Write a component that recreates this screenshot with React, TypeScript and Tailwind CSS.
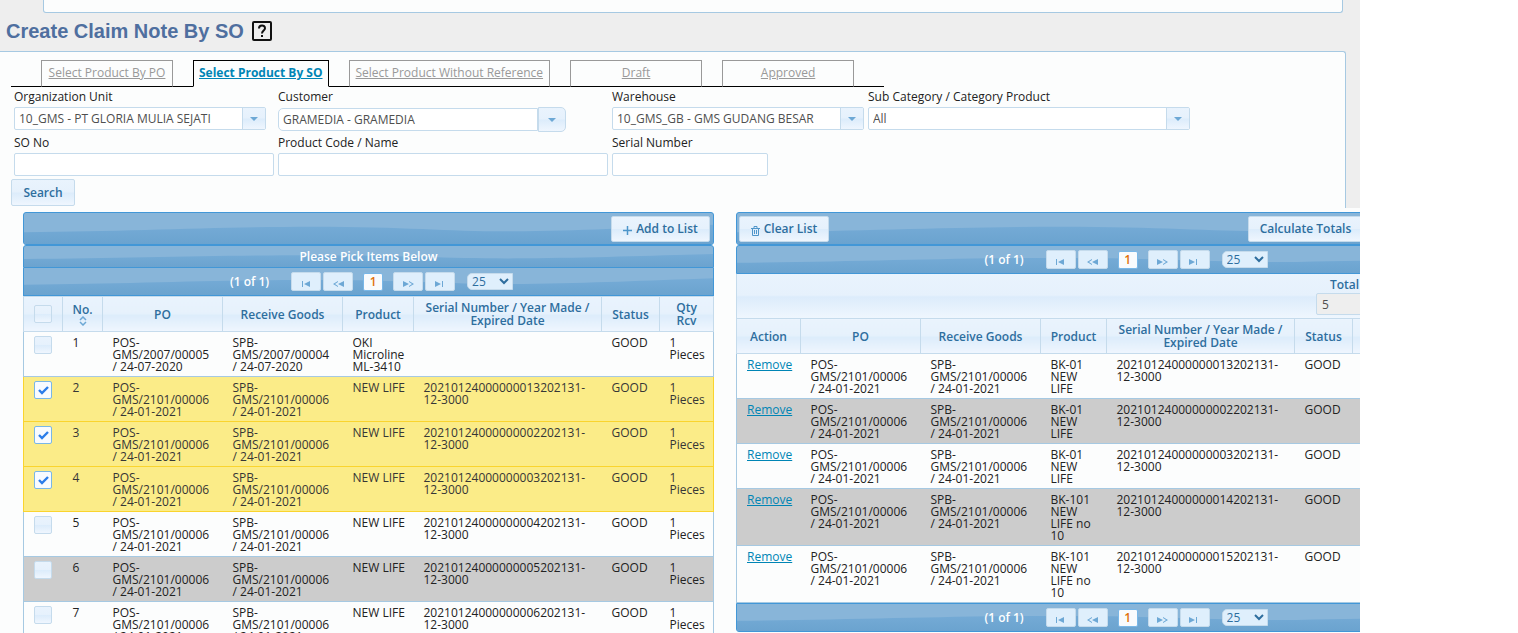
import React, { useState } from "react";

type Row = { id: number; po: string; receive: string; product: string; serial: string };

const TABS = ["Select Product By PO", "Select Product By SO", "Select Product Without Reference", "Draft", "Approved"];

const PO = "POS-\nGMS/2101/00006\n/ 24-01-2021";
const RECEIVE = "SPB-\nGMS/2101/00006\n/ 24-01-2021";

const PICK_ROWS: Row[] = [
  {
    id: 1,
    po: "POS-\nGMS/2007/00005\n/ 24-07-2020",
    receive: "SPB-\nGMS/2007/00004\n/ 24-07-2020",
    product: "OKI\nMicroline\nML-3410",
    serial: ""
  },
  { id: 2, po: PO, receive: RECEIVE, product: "NEW LIFE", serial: "20210124000000013202131-\n12-3000" },
  { id: 3, po: PO, receive: RECEIVE, product: "NEW LIFE", serial: "20210124000000002202131-\n12-3000" },
  { id: 4, po: PO, receive: RECEIVE, product: "NEW LIFE", serial: "20210124000000003202131-\n12-3000" },
  { id: 5, po: PO, receive: RECEIVE, product: "NEW LIFE", serial: "20210124000000004202131-\n12-3000" },
  { id: 6, po: PO, receive: RECEIVE, product: "NEW LIFE", serial: "20210124000000005202131-\n12-3000" },
  { id: 7, po: PO, receive: RECEIVE, product: "NEW LIFE", serial: "20210124000000006202131-\n12-3000" }
];

const LIST_ROWS: Row[] = [
  { id: 1, po: PO, receive: RECEIVE, product: "BK-01\nNEW\nLIFE", serial: "20210124000000013202131-\n12-3000" },
  { id: 2, po: PO, receive: RECEIVE, product: "BK-01\nNEW\nLIFE", serial: "20210124000000002202131-\n12-3000" },
  { id: 3, po: PO, receive: RECEIVE, product: "BK-01\nNEW\nLIFE", serial: "20210124000000003202131-\n12-3000" },
  { id: 4, po: PO, receive: RECEIVE, product: "BK-101\nNEW\nLIFE no\n10", serial: "20210124000000014202131-\n12-3000" },
  { id: 5, po: PO, receive: RECEIVE, product: "BK-101\nNEW\nLIFE no\n10", serial: "20210124000000015202131-\n12-3000" }
];

const GLASS = "bg-[linear-gradient(#e9f3fd_0%,#e6f1fc_48%,#dcecfb_52%,#eff6fe_100%)]";
const BTN = `${GLASS} border border-[#c5dbec] rounded-[2px] font-semibold text-[#2e6e9e] cursor-pointer`;
const FIELD = "h-[23px] border border-[#c5dbec] rounded-[2px] bg-white text-[12px] text-[#4f4f4f] px-1 focus:outline-none";
const HEAD = `${GLASS} border border-[#c5dbec] px-1 font-semibold text-[12px] leading-[13px] text-[#2e6e9e] text-center align-middle`;
const CELL = "pl-[10px] pr-2 pt-[5px] pb-[3px] align-top whitespace-pre-line";

/* Blue bar with the glossy wave behind its content */
const WaveBar = ({ className, children }: { className: string; children?: React.ReactNode }) => (
  <div className={`relative isolate overflow-hidden border border-[#4297d7] bg-[#88b5d9] ${className}`}>
    <svg className="absolute inset-0 -z-10 w-full h-full" viewBox="0 0 690 34" preserveAspectRatio="none" aria-hidden="true">
      <defs>
        <linearGradient id="wave" x1="0" y1="0" x2="0" y2="1">
          <stop offset="0" stopColor="#75abd6" />
          <stop offset="1" stopColor="#6ba3cf" />
        </linearGradient>
      </defs>
      <path d="M0 21C110 20 190 15 290 15S430 21 500 20S620 16 690 13V34H0Z" fill="url(#wave)" />
    </svg>
    {children}
  </div>
);

const Caret = () => (
  <svg width="8" height="4" viewBox="0 0 8 4" aria-hidden="true">
    <path d="M0 0H8L4 4Z" fill="#6da8d5" />
  </svg>
);

const SelectField = ({ id, value, className }: { id: string; value: string; className: string }) => (
  <div className={`relative ${className}`}>
    <select id={id} className={`${FIELD} w-full appearance-none`}>
      <option>{value}</option>
    </select>
    <span className={`pointer-events-none absolute inset-y-px right-px w-[23px] border-l border-[#c5dbec] flex items-center justify-center ${GLASS}`}>
      <Caret />
    </span>
  </div>
);

const Label = ({ htmlFor, children }: { htmlFor: string; children: React.ReactNode }) => (
  <label htmlFor={htmlFor} className="block h-5 leading-5 text-[12px] text-[#222]">
    {children}
  </label>
);

const PAGE_ICONS = {
  first: "M1 1H2V7H1ZM9 1V7L3 4Z",
  prev: "M5 1V2L2 4L5 6V7L0 4ZM11 1V7L5 4Z",
  next: "M0 1V7L6 4ZM6 1V2L9 4L6 6V7L11 4Z",
  last: "M0 1V7L6 4ZM7 1H8V7H7Z"
};

const PageButton = ({ kind, label }: { kind: keyof typeof PAGE_ICONS; label: string }) => (
  <button aria-label={label} className="w-[30px] h-[19px] bg-[#dfeffc] border border-[#c5dbec] rounded-[2px] flex items-end justify-center pb-[2px] cursor-pointer">
    <svg width="11" height="8" viewBox="0 0 11 8" aria-hidden="true">
      <path d={PAGE_ICONS[kind]} fill="#6da8d5" />
    </svg>
  </button>
);

const Paginator = ({ className }: { className: string }) => (
  <WaveBar className={`flex items-center justify-center pl-[6px] ${className}`}>
    <span className="font-semibold text-[12px] text-white mr-[22px]">(1 of 1)</span>
    <div className="flex gap-[2px]">
      <PageButton kind="first" label="First page" />
      <PageButton kind="prev" label="Previous page" />
    </div>
    <button className="mx-[10px] w-[20px] h-[18px] bg-[#f9fbfd] border border-[#79b7e7] rounded-[2px] font-semibold text-[12px] leading-4 text-[#e17009] cursor-pointer">
      1
    </button>
    <div className="flex gap-[2px]">
      <PageButton kind="next" label="Next page" />
      <PageButton kind="last" label="Last page" />
    </div>
    <div className="relative ml-3">
      <select aria-label="Rows per page" className="block appearance-none w-[46px] h-[17px] pl-1 bg-[#dfeffc] border border-[#c5dbec] rounded-l-[5px] text-[12px] leading-[15px] text-[#2e6e9e]">
        <option>25</option>
      </select>
      <svg className="pointer-events-none absolute right-1 top-[5px]" width="10" height="7" viewBox="0 0 10 7" aria-hidden="true">
        <path d="M1 1L5 5L9 1" fill="none" stroke="#2e6e9e" strokeWidth="2" />
      </svg>
    </div>
  </WaveBar>
);

const Checkbox = ({ label, checked, onChange }: { label: string; checked: boolean; onChange: () => void }) => (
  <span className="relative block w-[18px] h-[18px] mx-auto">
    <input
      type="checkbox"
      aria-label={label}
      checked={checked}
      onChange={onChange}
      className={`block appearance-none w-[18px] h-[18px] rounded-[2px] border cursor-pointer ${checked ? "bg-[#f8fbff] border-[#79b7e7]" : `border-[#c5dbec] ${GLASS}`}`}
    />
    {checked && (
      <svg className="pointer-events-none absolute left-1 top-[5px]" width="11" height="9" viewBox="0 0 11 9" aria-hidden="true">
        <path d="M1 4L4 7L10 1" fill="none" stroke="#2b7de9" strokeWidth="2.4" />
      </svg>
    )}
  </span>
);

const App: React.FC = () => {
  const [tab, setTab] = useState(1);
  const [picked, setPicked] = useState<number[]>([2, 3, 4]);

  const toggle = (id: number) => setPicked((p) => (p.includes(id) ? p.filter((x) => x !== id) : [...p, id]));

  const pickRowClass = (id: number) => {
    if (picked.includes(id)) return "bg-[#fbec88] border-[#fad42e] text-[#363636]";
    return id === 6 ? "bg-[#ccc] border-[#a6c9e2]" : "border-[#a6c9e2]";
  };

  return (
    <div className="h-screen overflow-hidden bg-white font-['Open_Sans','Noto_Sans',sans-serif] text-[12px] text-[#222]">
      <main className="mr-[158px] h-full overflow-hidden bg-[#fcfdfd]">
        <div className="bg-[#eee]">
          <div className="ml-[43px] mr-[17px] h-[13px] border border-t-0 border-[#a6c9e2] rounded-b-[3px] bg-[#fcfdfd]" />

          <div className="flex items-center gap-[8px] h-[38px] pl-[6px] pb-[3px]">
            <h1 className="font-['Liberation_Sans',Arial,sans-serif] font-bold text-[20px] text-[#4f6f9f]">Create Claim Note By SO</h1>
            <svg width="20" height="20" viewBox="0 0 20 20" fill="none" stroke="#111" aria-hidden="true">
              <rect x="1" y="1" width="18" height="18" rx="1" strokeWidth="2" />
              <path d="M7 7.5C7 3.5 13 3.5 13 7.2C13 9.5 10 9.5 10 12.5" strokeWidth="2" />
              <path d="M10 14V16" strokeWidth="2" />
            </svg>
          </div>

          {/* Search form */}
          <section className="mr-[14px] border-t border-r border-[#a6c9e2] rounded-tr-[3px] bg-[#fcfdfd] pl-[11px] pt-2 pb-[2px]">
            <nav className="flex w-fit">
              <span className="w-[30px] border-b border-black" />
              {TABS.map((t, i) => (
                <React.Fragment key={t}>
                  {i > 0 && <span className="w-5 border-b border-black" />}
                  <a
                    href="#"
                    onClick={() => setTab(i)}
                    className={`min-w-[132px] h-[27px] border text-center text-[12px] leading-6 underline ${
                      i === tab ? "px-[5px] border-black border-b-transparent font-bold text-[#0085b5]" : "px-[6px] border-[#999] border-b-black text-[#999]"
                    }`}
                  >
                    {t}
                  </a>
                </React.Fragment>
              ))}
              <span className="w-[30px] border-b border-black" />
            </nav>

            <div className="grid grid-cols-[264px_334px_256px_auto] gap-y-px ml-[3px]">
              <div>
                <Label htmlFor="org">Organization Unit</Label>
                <SelectField id="org" value="10_GMS - PT GLORIA MULIA SEJATI" className="w-[252px]" />
              </div>
              <div>
                <Label htmlFor="customer">Customer</Label>
                <div className="flex items-center">
                  <input id="customer" defaultValue="GRAMEDIA - GRAMEDIA" className={`${FIELD} w-[260px] rounded-l-[5px] rounded-r-none`} />
                  <button aria-label="Show customers" className={`w-7 h-[25px] border border-[#c5dbec] rounded-r-[5px] flex items-center justify-center ${GLASS}`}>
                    <Caret />
                  </button>
                </div>
              </div>
              <div>
                <Label htmlFor="warehouse">Warehouse</Label>
                <SelectField id="warehouse" value="10_GMS_GB - GMS GUDANG BESAR" className="w-[252px]" />
              </div>
              <div>
                <Label htmlFor="category">Sub Category / Category Product</Label>
                <SelectField id="category" value="All" className="w-[322px]" />
              </div>
              <div>
                <Label htmlFor="so">SO No</Label>
                <input id="so" className={`${FIELD} block w-[260px]`} />
              </div>
              <div>
                <Label htmlFor="product">Product Code / Name</Label>
                <input id="product" className={`${FIELD} block w-[330px]`} />
              </div>
              <div>
                <Label htmlFor="serial">Serial Number</Label>
                <input id="serial" className={`${FIELD} block w-[156px]`} />
              </div>
            </div>

            <button className={`${BTN} mt-[3px] h-[27px] w-16 text-[12px] leading-6`}>Search</button>
          </section>
        </div>

        <div className="flex items-start gap-[22px] pl-[23px] pt-1">
          {/* Items to pick from */}
          <div className="w-[691px] shrink-0">
            <WaveBar className="h-[33px] rounded-[3px] p-[3px] flex items-center justify-end">
              <button className={`${BTN} h-[26px] w-[99px] text-[12px] flex items-center justify-center gap-1`}>
                <svg className="mt-1" width="9" height="9" viewBox="0 0 9 9" aria-hidden="true">
                  <path d="M4 0H5V4H9V5H5V9H4V5H0V4H4Z" fill="#4f95ca" stroke="#4f95ca" strokeWidth="0.5" />
                </svg>
                Add to List
              </button>
            </WaveBar>
            <WaveBar className="h-[23px] rounded-t-[3px] text-center font-semibold text-[12px] leading-[22px] text-white">Please Pick Items Below</WaveBar>
            <Paginator className="h-[28px] border-t-0" />
            <table className="w-full table-fixed border-collapse text-[12px] leading-3">
              <colgroup>
                <col className="w-[39px]" />
                <col className="w-[40px]" />
                <col className="w-[120px]" />
                <col className="w-[120px]" />
                <col className="w-[71px]" />
                <col className="w-[188px]" />
                <col className="w-[58px]" />
                <col />
              </colgroup>
              <thead>
                <tr className="h-[35px]">
                  <th className={HEAD}>
                    <Checkbox
                      label="Select all"
                      checked={picked.length === PICK_ROWS.length}
                      onChange={() => setPicked(picked.length === PICK_ROWS.length ? [] : PICK_ROWS.map((r) => r.id))}
                    />
                  </th>
                  <th className={HEAD}>
                    No.
                    <svg className="block mx-auto" width="8" height="10" viewBox="0 0 8 10" aria-hidden="true">
                      <path d="M1 4L4 1L7 4M1 6L4 9L7 6" fill="none" stroke="#6da8d5" strokeWidth="1.5" />
                    </svg>
                  </th>
                  <th className={HEAD}>PO</th>
                  <th className={HEAD}>Receive Goods</th>
                  <th className={HEAD}>Product</th>
                  <th className={HEAD}>Serial Number / Year Made / Expired Date</th>
                  <th className={HEAD}>Status</th>
                  <th className={HEAD}>
                    Qty
                    <br />
                    Rcv
                  </th>
                </tr>
              </thead>
              <tbody>
                {PICK_ROWS.map((r) => (
                  <tr key={r.id} className={`border h-[45px] ${pickRowClass(r.id)}`}>
                    <td className="pt-1 align-top">
                      <Checkbox label={`Select row ${r.id}`} checked={picked.includes(r.id)} onChange={() => toggle(r.id)} />
                    </td>
                    <td className={CELL}>{r.id}</td>
                    <td className={CELL}>{r.po}</td>
                    <td className={CELL}>{r.receive}</td>
                    <td className={CELL}>{r.product}</td>
                    <td className={CELL}>{r.serial}</td>
                    <td className={CELL}>GOOD</td>
                    <td className={CELL}>{"1\nPieces"}</td>
                  </tr>
                ))}
              </tbody>
            </table>
          </div>

          {/* Items already in the claim list */}
          <div className="w-[774px] shrink-0">
            <WaveBar className="h-[33px] rounded-[3px] pl-[2px] pr-[146px] flex items-center justify-between">
              <button className={`${BTN} h-[26px] w-[90px] text-[12px] flex items-center justify-center gap-1`}>
                <svg className="mt-1" width="9" height="10" viewBox="0 0 9 10" fill="none" stroke="#4f95ca" aria-hidden="true">
                  <path d="M0 2.5H9M3 2V0.5H6V2M1.5 3V9.5H7.5V3M3.5 4V8M5.5 4V8" />
                </svg>
                Clear List
              </button>
              <button className={`${BTN} h-[26px] w-[115px] text-[12px]`}>Calculate Totals</button>
            </WaveBar>
            <Paginator className="h-[29px] rounded-t-[3px]" />
            <div className={`h-[44px] flex justify-end border-x border-[#c5dbec] ${GLASS}`}>
              <div className="w-[193px]">
                <label htmlFor="total" className="block pl-[14px] pt-[3px] leading-4 font-semibold text-[#2e6e9e]">
                  Total
                </label>
                <input id="total" readOnly value="5" className="block w-[120px] h-[22px] px-[5px] border border-[#c5dbec] rounded-[2px] bg-[#eee] text-[12px] text-[#4f4f4f]" />
              </div>
            </div>
            <table className="w-full table-fixed border-collapse text-[12px] leading-3">
              <colgroup>
                <col className="w-[64px]" />
                <col className="w-[120px]" />
                <col className="w-[120px]" />
                <col className="w-[66px]" />
                <col className="w-[188px]" />
                <col className="w-[58px]" />
                <col />
              </colgroup>
              <thead>
                <tr className="h-[35px]">
                  <th className={HEAD}>Action</th>
                  <th className={HEAD}>PO</th>
                  <th className={HEAD}>Receive Goods</th>
                  <th className={HEAD}>Product</th>
                  <th className={HEAD}>Serial Number / Year Made / Expired Date</th>
                  <th className={HEAD}>Status</th>
                  <th className={HEAD} />
                </tr>
              </thead>
              <tbody>
                {LIST_ROWS.map((r, idx) => (
                  <tr key={r.id} className={`border border-[#a6c9e2] h-[45px] ${idx % 2 ? "bg-[#ccc]" : ""}`}>
                    <td className={CELL}>
                      <a href="#" className="underline text-[#0085b5]">
                        Remove
                      </a>
                    </td>
                    <td className={CELL}>{r.po}</td>
                    <td className={CELL}>{r.receive}</td>
                    <td className={CELL}>{r.product}</td>
                    <td className={CELL}>{r.serial}</td>
                    <td className={CELL}>GOOD</td>
                    <td className={CELL} />
                  </tr>
                ))}
              </tbody>
            </table>
            <Paginator className="h-[29px] rounded-b-[3px]" />
          </div>
        </div>
      </main>
    </div>
  );
};

export default App;
